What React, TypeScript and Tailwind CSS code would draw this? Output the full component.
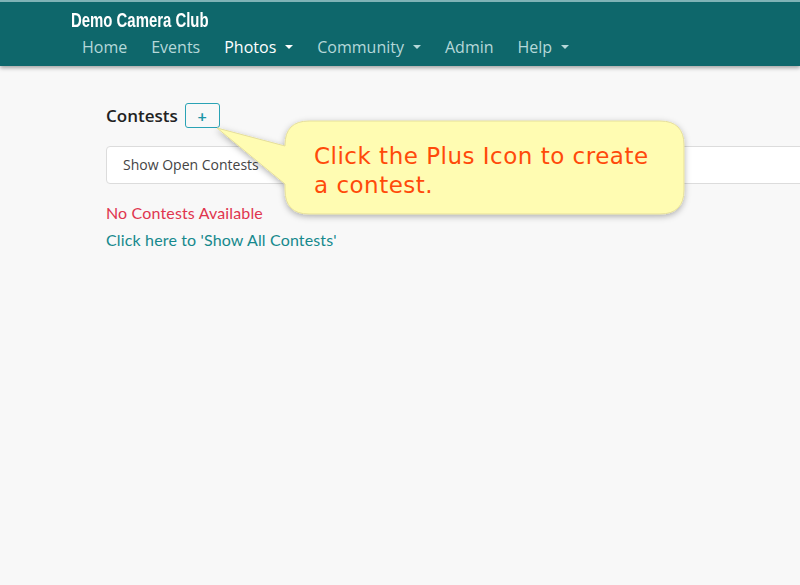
import React from 'react';

const navLinks = [
    { name: 'Home', active: false, dropdown: false },
    { name: 'Events', active: false, dropdown: false },
    { name: 'Photos', active: true, dropdown: true },
    { name: 'Community', active: false, dropdown: true },
    { name: 'Admin', active: false, dropdown: false },
    { name: 'Help', active: false, dropdown: true },
];

// Top navigation bar
const Navbar: React.FC = () => (
    <header className="bg-[#0e676b] border-t-2 border-[#7fb3b6] shadow-[0_2px_4px_rgba(0,0,0,0.35)] h-[66px]">
        <div className="pl-[71px]">
            <div className="pt-[6px] h-[29px]">
                <span className="inline-block origin-left [transform:scaleX(0.71)] text-[21px] leading-[24px] font-bold text-white whitespace-nowrap" style={{ fontFamily: '"Liberation Sans", Arial, sans-serif' }}>
                    Demo Camera Club
                </span>
            </div>
            <nav className="flex items-center h-[31px] -ml-[1px]" style={{ fontFamily: '"Open Sans", sans-serif' }}>
                {navLinks.map(link => (
                    <a key={link.name} className={`flex items-center px-[12px] text-[16px] ${link.active ? 'text-white' : 'text-[#b5d8d9]'}`}>
                        {link.name}
                        {link.dropdown && (
                            <span className="ml-[9px] mt-[1px] w-0 h-0 border-l-[4px] border-r-[4px] border-t-[4px] border-l-transparent border-r-transparent border-t-current" />
                        )}
                    </a>
                ))}
            </nav>
        </div>
    </header>
);

// Yellow help callout overlay
const Callout: React.FC = () => (
    <>
        <svg className="absolute inset-0 pointer-events-none" width="800" height="585" viewBox="0 0 800 585">
            <defs>
                <filter id="sh" x="-10%" y="-20%" width="120%" height="150%">
                    <feDropShadow dx="0" dy="2" stdDeviation="3" floodColor="#000" floodOpacity="0.3" />
                </filter>
            </defs>
            <path
                d="M309 121 H660 Q684 121 684 145 V190 Q684 214 660 214 H309 Q285 214 285 190 V184 L217 128 L285 146 V145 Q285 121 309 121 Z"
                fill="#fffcb2"
                stroke="#e6df9a"
                strokeWidth="1"
                filter="url(#sh)"
            />
        </svg>
        <div className="absolute left-[314px] top-[142px] w-[348px] text-[23px] leading-[29px] text-[#ff4a0a] tracking-[0.5px]" style={{ fontFamily: '"DejaVu Sans", sans-serif' }}>
            Click the Plus Icon to create a contest.
        </div>
    </>
);

export default function App() {
    return (
        <div className="relative w-[800px] h-[585px] overflow-hidden bg-[#f8f8f8]" style={{ fontFamily: 'Lato, "Open Sans", sans-serif' }}>
            <Navbar />
            <main className="pl-[106px] pt-[37px]">
                <div className="flex items-center gap-[7px]">
                    <h2 className="text-[17px] font-semibold text-[#222]" style={{ fontFamily: '"Open Sans", sans-serif' }}>Contests</h2>
                    <button className="w-[35px] h-[25px] border border-[#2aa3b5] rounded-[3px] text-[#1c96a8] text-[16px] leading-none font-bold flex items-center justify-center">+</button>
                </div>
                <div className="mt-[17px] h-[38px] w-[720px] bg-white border border-[#dcdcdc] rounded-[4px] flex items-center pl-[16px] text-[14px] text-[#444]" style={{ fontFamily: '"Open Sans", sans-serif' }}>
                    Show Open Contests
                </div>
                <p className="mt-[19px] text-[16px] leading-[20px] tracking-[0.15px] text-[#e0354f]">No Contests Available</p>
                <p className="mt-[7px] text-[16px] leading-[20px] tracking-[0.15px] text-[#16898d]">Click here to 'Show All Contests'</p>
            </main>
            <Callout />
        </div>
    );
}
